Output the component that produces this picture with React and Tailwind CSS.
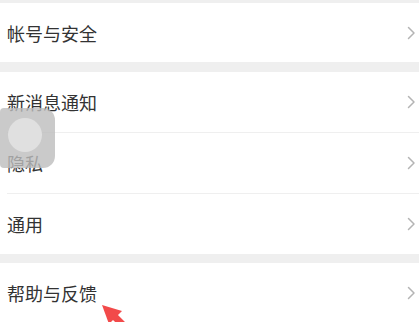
import React from "react";

function Chevron() {
  return (
    <svg width="9" height="14" viewBox="0 0 9 14" className="shrink-0">
      <path d="M1.5 1.5 L7 7 L1.5 12.5" fill="none" stroke="#b4b4b4" strokeWidth="1.5" strokeLinecap="round" strokeLinejoin="round" />
    </svg>
  );
}

function Row({ label, h = "h-[60px]", divider }) {
  return (
    <div className="bg-white">
      <div className={`${h} flex items-center justify-between pl-[7px] pr-[3px]`}>
        <span className="text-[18px] text-[#333333] leading-none">{label}</span>
        <Chevron />
      </div>
      {divider && <div className="ml-[7px] h-px bg-[#efefef]" />}
    </div>
  );
}

export default function App() {
  return (
    <div
      className="relative w-[419px] h-[322px] overflow-hidden bg-[#efefef]"
      style={{ fontFamily: '"Noto Sans CJK SC", "Noto Sans", sans-serif' }}
    >
      <div className="flex flex-col">
        <div className="h-[3px]" />
        <Row label="帐号与安全" h="h-[59px]" />
        <div className="h-[10px]" />
        <Row label="新消息通知" divider />
        <Row label="隐私" divider />
        <Row label="通用" />
        <div className="h-[9px]" />
        <Row label="帮助与反馈" />
      </div>

      {/* floating assistive touch button */}
      <div className="absolute left-0 top-[108px] w-[55px] h-[60px] rounded-r-[12px] rounded-l-[4px] bg-[#bdbdbd]/80 flex items-center justify-center">
        <div className="w-[34px] h-[34px] rounded-full bg-[#e2e2e2]/90 -ml-[6px] -mt-[6px]" />
      </div>

      {/* red arrow */}
      <svg className="absolute left-0 top-0" width="419" height="322" viewBox="0 0 419 322">
        <polygon points="102,305 122,311 109,324" fill="#f24a4a" />
        <line x1="114" y1="316" x2="140" y2="342" stroke="#f24a4a" strokeWidth="7" />
      </svg>
    </div>
  );
}
